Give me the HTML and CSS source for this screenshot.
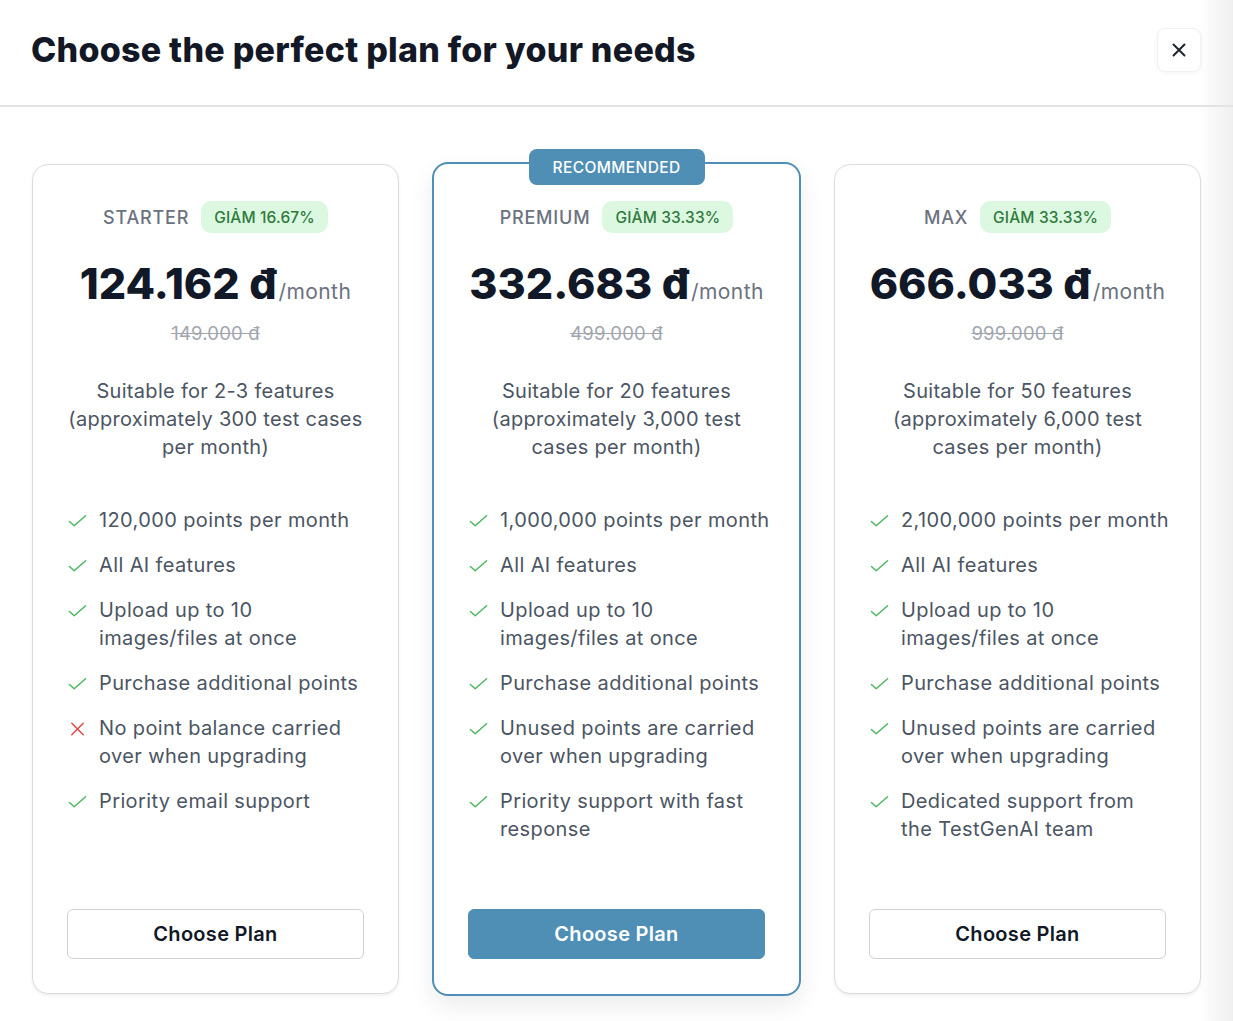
FILE: index.html
```html
<!DOCTYPE html>
<html lang="en">
<head>
<meta charset="utf-8">
<title>Choose the perfect plan</title>
<link rel="stylesheet" href="styles.css">
</head>
<body>
<div class="modal">
  <header class="modal-head">
    <h1 class="modal-title">Choose the perfect plan for your needs</h1>
    <button class="close-btn" aria-label="Close">
      <svg width="16" height="16" viewBox="0 0 16 16"><path d="M2.5 2.5 L13.5 13.5 M13.5 2.5 L2.5 13.5" stroke="#1f2430" stroke-width="2" stroke-linecap="round" fill="none"/></svg>
    </button>
  </header>

  <main class="plans">
    <section class="card">
      <div class="plan-row"><span class="plan-name">STARTER</span><span class="discount">GIẢM 16.67%</span></div>
      <div class="price"><span class="amount">124.162 đ</span><span class="per">/month</span></div>
      <div class="old-price">149.000 đ</div>
      <p class="desc">Suitable for 2-3 features<br>(approximately 300 test cases<br>per month)</p>
      <ul class="features">
        <li><svg class="ic ok" viewBox="0 0 20 14"><path d="M1.5 7.5 L6.5 12 L18.5 1.5"/></svg><span>120,000 points per month</span></li>
        <li><svg class="ic ok" viewBox="0 0 20 14"><path d="M1.5 7.5 L6.5 12 L18.5 1.5"/></svg><span>All AI features</span></li>
        <li><svg class="ic ok" viewBox="0 0 20 14"><path d="M1.5 7.5 L6.5 12 L18.5 1.5"/></svg><span>Upload up to 10<br>images/files at once</span></li>
        <li><svg class="ic ok" viewBox="0 0 20 14"><path d="M1.5 7.5 L6.5 12 L18.5 1.5"/></svg><span>Purchase additional points</span></li>
        <li><svg class="ic no" viewBox="0 0 20 14"><path d="M4 1 L16 13 M16 1 L4 13"/></svg><span>No point balance carried<br>over when upgrading</span></li>
        <li><svg class="ic ok" viewBox="0 0 20 14"><path d="M1.5 7.5 L6.5 12 L18.5 1.5"/></svg><span>Priority email support</span></li>
      </ul>
      <button class="choose">Choose Plan</button>
    </section>

    <section class="card featured">
      <div class="ribbon">RECOMMENDED</div>
      <div class="plan-row"><span class="plan-name">PREMIUM</span><span class="discount">GIẢM 33.33%</span></div>
      <div class="price"><span class="amount">332.683 đ</span><span class="per">/month</span></div>
      <div class="old-price">499.000 đ</div>
      <p class="desc">Suitable for 20 features<br>(approximately 3,000 test<br>cases per month)</p>
      <ul class="features">
        <li><svg class="ic ok" viewBox="0 0 20 14"><path d="M1.5 7.5 L6.5 12 L18.5 1.5"/></svg><span>1,000,000 points per month</span></li>
        <li><svg class="ic ok" viewBox="0 0 20 14"><path d="M1.5 7.5 L6.5 12 L18.5 1.5"/></svg><span>All AI features</span></li>
        <li><svg class="ic ok" viewBox="0 0 20 14"><path d="M1.5 7.5 L6.5 12 L18.5 1.5"/></svg><span>Upload up to 10<br>images/files at once</span></li>
        <li><svg class="ic ok" viewBox="0 0 20 14"><path d="M1.5 7.5 L6.5 12 L18.5 1.5"/></svg><span>Purchase additional points</span></li>
        <li><svg class="ic ok" viewBox="0 0 20 14"><path d="M1.5 7.5 L6.5 12 L18.5 1.5"/></svg><span>Unused points are carried<br>over when upgrading</span></li>
        <li><svg class="ic ok" viewBox="0 0 20 14"><path d="M1.5 7.5 L6.5 12 L18.5 1.5"/></svg><span>Priority support with fast<br>response</span></li>
      </ul>
      <button class="choose primary">Choose Plan</button>
    </section>

    <section class="card">
      <div class="plan-row"><span class="plan-name">MAX</span><span class="discount">GIẢM 33.33%</span></div>
      <div class="price"><span class="amount">666.033 đ</span><span class="per">/month</span></div>
      <div class="old-price">999.000 đ</div>
      <p class="desc">Suitable for 50 features<br>(approximately 6,000 test<br>cases per month)</p>
      <ul class="features">
        <li><svg class="ic ok" viewBox="0 0 20 14"><path d="M1.5 7.5 L6.5 12 L18.5 1.5"/></svg><span>2,100,000 points per month</span></li>
        <li><svg class="ic ok" viewBox="0 0 20 14"><path d="M1.5 7.5 L6.5 12 L18.5 1.5"/></svg><span>All AI features</span></li>
        <li><svg class="ic ok" viewBox="0 0 20 14"><path d="M1.5 7.5 L6.5 12 L18.5 1.5"/></svg><span>Upload up to 10<br>images/files at once</span></li>
        <li><svg class="ic ok" viewBox="0 0 20 14"><path d="M1.5 7.5 L6.5 12 L18.5 1.5"/></svg><span>Purchase additional points</span></li>
        <li><svg class="ic ok" viewBox="0 0 20 14"><path d="M1.5 7.5 L6.5 12 L18.5 1.5"/></svg><span>Unused points are carried<br>over when upgrading</span></li>
        <li><svg class="ic ok" viewBox="0 0 20 14"><path d="M1.5 7.5 L6.5 12 L18.5 1.5"/></svg><span>Dedicated support from<br>the TestGenAI team</span></li>
      </ul>
      <button class="choose">Choose Plan</button>
    </section>
  </main>
</div>
</body>
</html>
```

FILE: styles.css
```css
* { box-sizing: border-box; }

html, body {
  margin: 0;
  padding: 0;
}

body {
  font-family: Inter, "Noto Sans", "Liberation Sans", sans-serif;
  color: #111827;
  background: linear-gradient(to right, #ffffff calc(100% - 34px), #efefef 100%);
  min-height: 1021px;
}

.modal {
  width: 100%;
}

.modal-head {
  height: 107px;
  padding: 0 32px 0 31px;
  display: flex;
  align-items: center;
  justify-content: space-between;
  border-bottom: 2px solid #e3e3e3;
}

.modal-title {
  margin: 0;
  font-size: 34px;
  font-weight: 800;
  letter-spacing: 0.25px;
  color: #131826;
  padding-bottom: 6px;
}

.close-btn {
  width: 44px;
  height: 44px;
  border: 1px solid #f1f1f1;
  border-radius: 8px;
  background: #fff;
  box-shadow: 0 1px 4px rgba(0, 0, 0, 0.05);
  display: flex;
  align-items: center;
  justify-content: center;
  padding: 0;
  margin-bottom: 6px;
}

.plans {
  display: grid;
  grid-template-columns: repeat(3, minmax(0, 1fr));
  gap: 34px;
  padding: 57px 32px 0 32px;
}

.card {
  position: relative;
  min-height: 830px;
  border: 1px solid #dcdcde;
  border-radius: 16px;
  background: #fff;
  box-shadow: 0 2px 3px rgba(0, 0, 0, 0.06);
  padding: 36px 34px 34px 34px;
  display: flex;
  flex-direction: column;
  align-items: stretch;
}

.card.featured {
  border: 2px solid #4f8fb5;
  margin: -2px -1px;
  padding: 37px 34px 35px 34px;
  box-shadow: 0 10px 24px rgba(0, 0, 0, 0.08);
}

.ribbon {
  position: absolute;
  top: -15px;
  left: 50%;
  transform: translateX(-50%);
  width: 176px;
  height: 36px;
  background: #4f8fb5;
  color: #fff;
  border-radius: 8px;
  font-size: 15.5px;
  font-weight: 500;
  display: flex;
  align-items: center;
  justify-content: center;
  letter-spacing: 0.4px;
}

.plan-row {
  display: flex;
  justify-content: center;
  align-items: center;
  gap: 12px;
  height: 32px;
}

.plan-name {
  font-size: 18px;
  font-weight: 500;
  color: #6b7280;
  letter-spacing: 0.8px;
}

.discount {
  background: #dcf8e1;
  color: #2f7a3d;
  font-size: 15.5px;
  font-weight: 500;
  border-radius: 10px;
  padding: 0 13px;
  height: 32px;
  display: flex;
  align-items: center;
  letter-spacing: 0.15px;
}

.price {
  margin-top: 23px;
  text-align: center;
  line-height: 55px;
  white-space: nowrap;
}

.amount {
  font-size: 43px;
  font-weight: 800;
  color: #111827;
  letter-spacing: 0;
}

.per {
  font-size: 21px;
  color: #6b7280;
  font-weight: 400;
  margin-left: 2px;
  letter-spacing: 0.4px;
}

.old-price {
  margin-top: 0;
  text-align: center;
  font-size: 18.5px;
  line-height: 24px;
  color: #a1a6ae;
  text-decoration: line-through;
  letter-spacing: 0.2px;
}

.desc {
  margin: 32px -6px 0 -6px;
  text-align: center;
  font-size: 20px;
  line-height: 28px;
  color: #4b5563;
  letter-spacing: 0.3px;
  white-space: nowrap;
}

.features {
  list-style: none;
  margin: 45px 0 0 0;
  padding: 0;
  display: flex;
  flex-direction: column;
  gap: 17px;
}

.features li {
  display: flex;
  align-items: flex-start;
  gap: 12px;
  font-size: 20px;
  line-height: 28px;
  color: #4b5563;
  letter-spacing: 0.38px;
  white-space: nowrap;
}

.ic {
  flex: 0 0 auto;
  width: 19px;
  height: 14px;
  margin-top: 8px;
  margin-left: 1px;
  fill: none;
  stroke-width: 1.6;
  stroke-linecap: round;
  stroke-linejoin: round;
}

.ic.ok { stroke: #4cb860; }
.ic.no { stroke: #e2474b; }

.choose {
  margin-top: auto;
  height: 50px;
  width: 100%;
  border: 1px solid #cfd1d6;
  border-radius: 6px;
  background: #fff;
  font-family: inherit;
  font-size: 20px;
  font-weight: 600;
  letter-spacing: 0.3px;
  color: #111827;
}

.choose.primary {
  background: #4f8fb5;
  border-color: #4f8fb5;
  color: #fff;
}
```
